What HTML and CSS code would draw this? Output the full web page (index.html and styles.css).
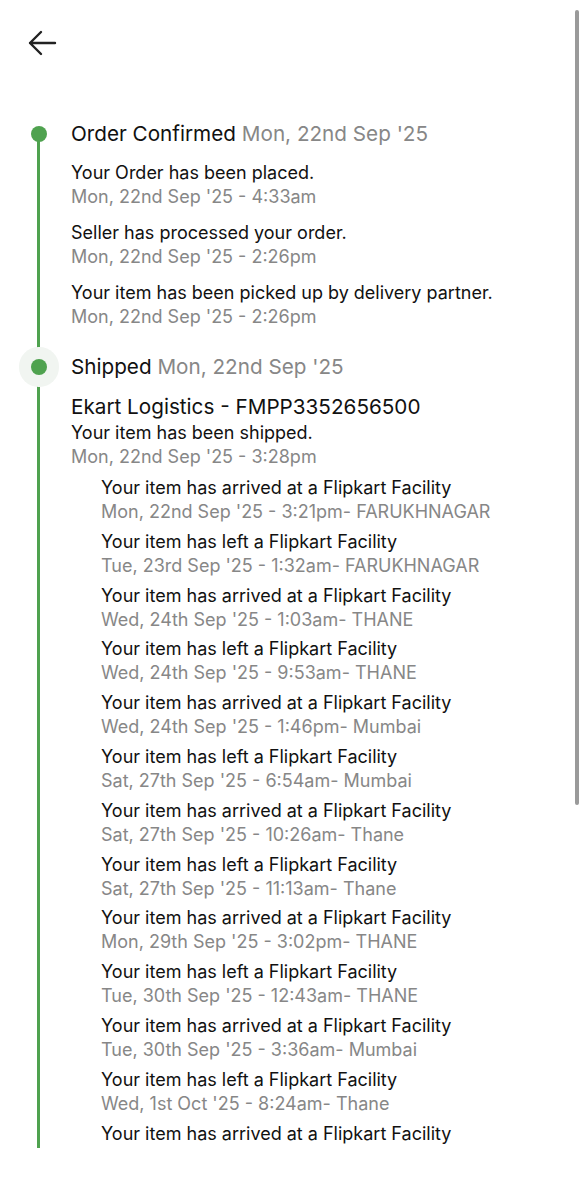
FILE: index.html
```html
<!DOCTYPE html>
<html>
<head>
<meta charset="utf-8">
<link rel="stylesheet" href="styles.css">
</head>
<body>
<div class="page">
  <header class="topbar">
    <svg class="back" width="30" height="26" viewBox="0 0 30 26"><path d="M28 13H3M14 2L3 13l11 11" fill="none" stroke="#222" stroke-width="2.4" stroke-linecap="round" stroke-linejoin="round"/></svg>
  </header>

  <div class="timeline">
    <section class="stage">
      <h2 class="stage-title"><span class="dot"></span>Order Confirmed <span class="muted">Mon, 22nd Sep '25</span></h2>
      <div class="event"><div class="ev-t">Your Order has been placed.</div><div class="ev-d">Mon, 22nd Sep '25 - 4:33am</div></div>
      <div class="event"><div class="ev-t">Seller has processed your order.</div><div class="ev-d">Mon, 22nd Sep '25 - 2:26pm</div></div>
      <div class="event"><div class="ev-t">Your item has been picked up by delivery partner.</div><div class="ev-d">Mon, 22nd Sep '25 - 2:26pm</div></div>
    </section>

    <section class="stage shipped">
      <h2 class="stage-title"><span class="dot halo"></span>Shipped <span class="muted">Mon, 22nd Sep '25</span></h2>
      <div class="carrier">Ekart Logistics - FMPP3352656500</div>
      <div class="event first"><div class="ev-t">Your item has been shipped.</div><div class="ev-d">Mon, 22nd Sep '25 - 3:28pm</div></div>
      <div class="sub">
        <div class="sev"><div class="ev-t">Your item has arrived at a Flipkart Facility</div><div class="ev-d">Mon, 22nd Sep '25 - 3:21pm- FARUKHNAGAR</div></div>
        <div class="sev"><div class="ev-t">Your item has left a Flipkart Facility</div><div class="ev-d">Tue, 23rd Sep '25 - 1:32am- FARUKHNAGAR</div></div>
        <div class="sev"><div class="ev-t">Your item has arrived at a Flipkart Facility</div><div class="ev-d">Wed, 24th Sep '25 - 1:03am- THANE</div></div>
        <div class="sev"><div class="ev-t">Your item has left a Flipkart Facility</div><div class="ev-d">Wed, 24th Sep '25 - 9:53am- THANE</div></div>
        <div class="sev"><div class="ev-t">Your item has arrived at a Flipkart Facility</div><div class="ev-d">Wed, 24th Sep '25 - 1:46pm- Mumbai</div></div>
        <div class="sev"><div class="ev-t">Your item has left a Flipkart Facility</div><div class="ev-d">Sat, 27th Sep '25 - 6:54am- Mumbai</div></div>
        <div class="sev"><div class="ev-t">Your item has arrived at a Flipkart Facility</div><div class="ev-d">Sat, 27th Sep '25 - 10:26am- Thane</div></div>
        <div class="sev"><div class="ev-t">Your item has left a Flipkart Facility</div><div class="ev-d">Sat, 27th Sep '25 - 11:13am- Thane</div></div>
        <div class="sev"><div class="ev-t">Your item has arrived at a Flipkart Facility</div><div class="ev-d">Mon, 29th Sep '25 - 3:02pm- THANE</div></div>
        <div class="sev"><div class="ev-t">Your item has left a Flipkart Facility</div><div class="ev-d">Tue, 30th Sep '25 - 12:43am- THANE</div></div>
        <div class="sev"><div class="ev-t">Your item has arrived at a Flipkart Facility</div><div class="ev-d">Tue, 30th Sep '25 - 3:36am- Mumbai</div></div>
        <div class="sev"><div class="ev-t">Your item has left a Flipkart Facility</div><div class="ev-d">Wed, 1st Oct '25 - 8:24am- Thane</div></div>
        <div class="sev"><div class="ev-t">Your item has arrived at a Flipkart Facility</div></div>
      </div>
    </section>
  </div>
</div>
<div class="scrollbar"></div>
</body>
</html>
```
FILE: styles.css
```css
* { box-sizing: border-box; }
html, body { margin: 0; padding: 0; background: #fff; }
body {
  font-family: Inter, "Noto Sans", "Liberation Sans", sans-serif;
  color: #111;
  height: 1200px;
  overflow: hidden;
}
.page { width: 584px; }
.topbar { height: 120px; padding: 30px 0 0 27px; }
.back { display: block; }
.timeline {
  position: relative;
  padding-left: 71px;
  padding-bottom: 2px;
}
.timeline::before {
  content: "";
  position: absolute;
  left: 37px;
  width: 3px;
  top: 13px;
  bottom: 0;
  background: #4fa24f;
}
.stage-title {
  position: relative;
  margin: 0;
  font-size: 20.7px;
  font-weight: 400;
  line-height: 28px;
  color: #111;
}
.muted { color: #878787; }
.dot {
  position: absolute;
  left: -40px;
  top: 6px;
  width: 16px;
  height: 16px;
  border-radius: 50%;
  background: #4fa24f;
}
.dot.halo { box-shadow: 0 0 0 12px #f1f5f1; }
.event { margin-top: 13px; font-size: 18px; line-height: 24px; }
.event + .event { margin-top: 12px; }
.ev-t { color: #111; }
.ev-d { color: #878787; }
.shipped { margin-top: 24px; }
.carrier { margin-top: 12px; font-size: 20.7px; line-height: 28px; }
.event.first { margin-top: 0; }
.sub { padding-left: 30px; padding-top: 7px; }
.sev { font-size: 18px; line-height: 24px; margin-bottom: 5.8px; }
.sev:last-child { margin-bottom: 0; }
.scrollbar {
  position: fixed;
  right: 5px;
  top: 10px;
  width: 4px;
  height: 795px;
  border-radius: 2px;
  background: #9a9a9a;
}
```
